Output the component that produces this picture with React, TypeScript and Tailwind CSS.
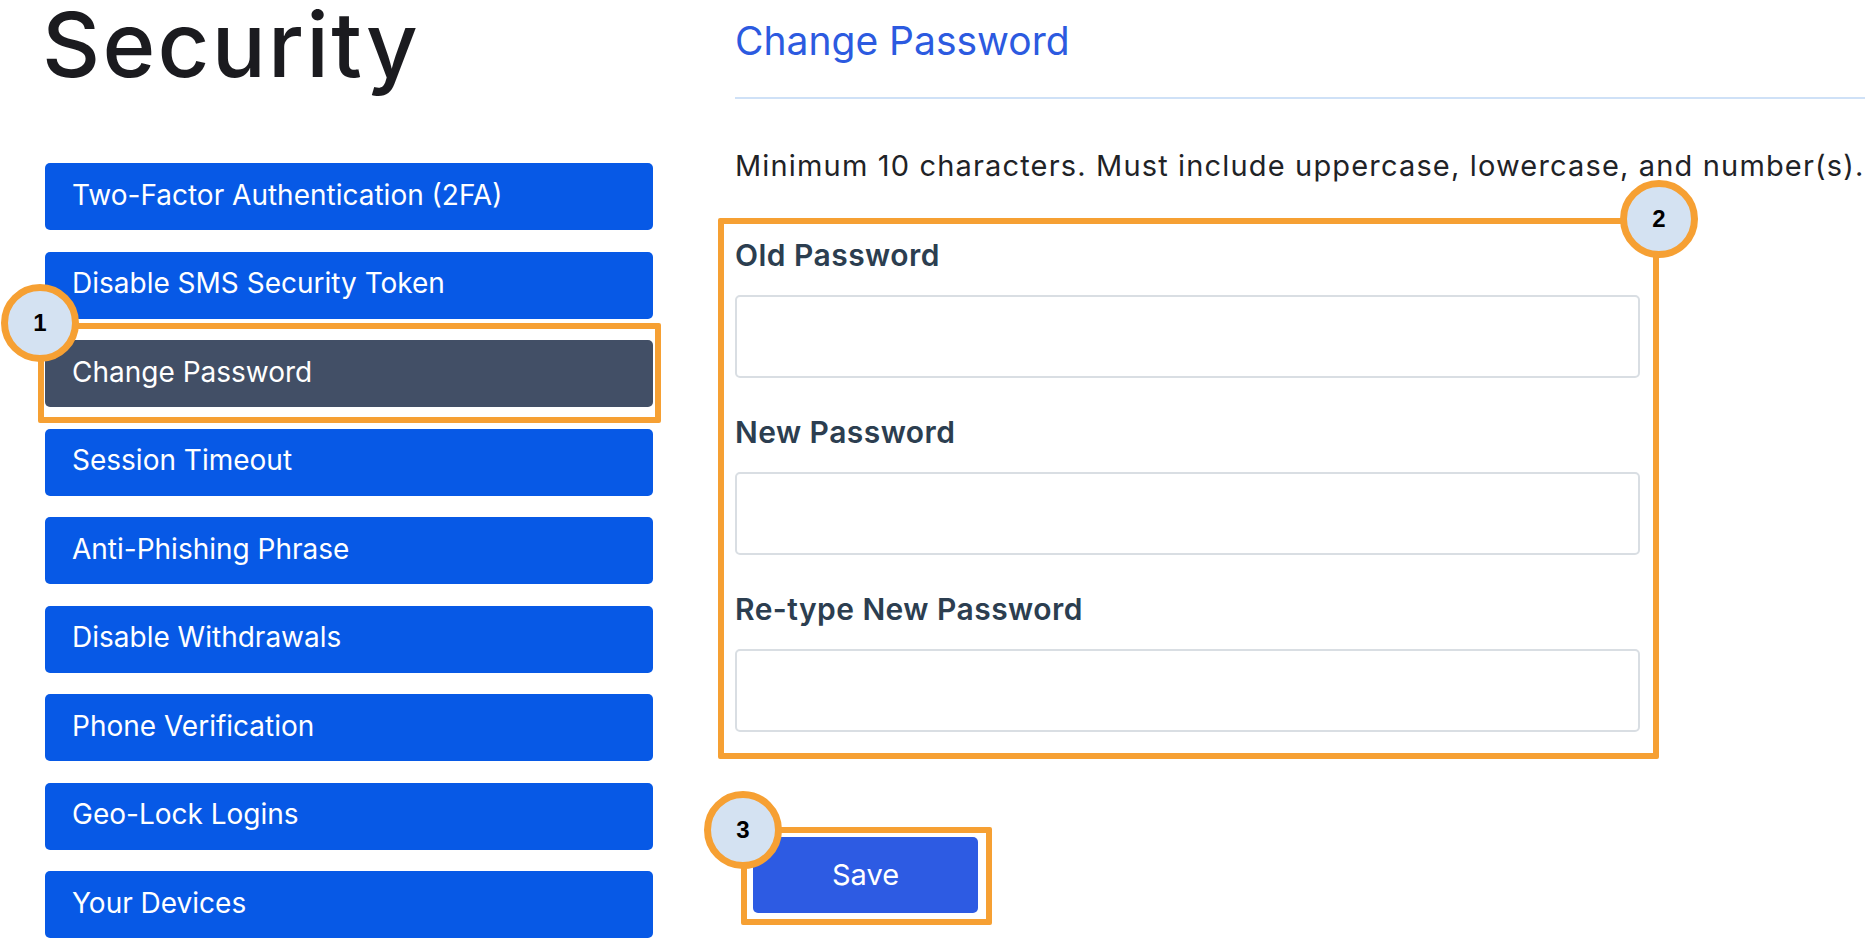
import React from "react";

const items = [
  "Two-Factor Authentication (2FA)",
  "Disable SMS Security Token",
  "Change Password",
  "Session Timeout",
  "Anti-Phishing Phrase",
  "Disable Withdrawals",
  "Phone Verification",
  "Geo-Lock Logins",
  "Your Devices",
];

function Badge({ n, className }: { n: string; className: string }) {
  return (
    <div
      className={
        "absolute z-10 flex h-[78px] w-[78px] items-center justify-center rounded-full border-[7px] border-[#f6a033] bg-[#d4e2f2] font-['Liberation_Sans',sans-serif] text-[24px] font-bold text-black " +
        className
      }
    >
      {n}
    </div>
  );
}

function Field({ label, first }: { label: string; first?: boolean }) {
  return (
    <div className={first ? "" : "mt-[36px]"}>
      <div className="text-[30px] font-semibold leading-[36px] tracking-[0.015em] text-[#2c3e50]">{label}</div>
      <input
        type="password"
        className="mt-[22px] block h-[83px] w-full rounded-[5px] border-2 border-[#d9dee3] bg-white outline-none"
      />
    </div>
  );
}

export default function App() {
  return (
    <div className="flex h-[943px] w-[1865px] overflow-hidden bg-white font-['Inter',sans-serif]">
      <div className="ml-[45px] flex w-[608px] shrink-0 flex-col">
        <h1 className="ml-[-3px] mt-[-9px] text-[90px] font-medium leading-[108px] tracking-[0.025em] text-[#1b1b1f]">
          Security
        </h1>
        <nav className="mt-[64px] flex flex-col gap-[21.5px]">
          {items.map((t) => {
            const active = t === "Change Password";
            return (
              <div key={t} className="relative">
                <div
                  className={
                    "flex h-[67px] items-center rounded-[5px] px-[27px] pb-[4px] text-[28px] text-white " +
                    (active ? "bg-[#424f66]" : "bg-[#0759e6]")
                  }
                >
                  {t}
                </div>
                {active && (
                  <>
                    <div className="pointer-events-none absolute -bottom-[16px] -left-[7px] -right-[8px] -top-[17px] rounded-[2px] border-[6px] border-[#f6a033]" />
                    <Badge n="1" className="-left-[44px] -top-[56px]" />
                  </>
                )}
              </div>
            );
          })}
        </nav>
      </div>

      <div className="ml-[82px] flex min-w-0 flex-1 flex-col">
        <h2 className="mt-[17px] text-[39px] leading-[47px] text-[#2c5ae0]">Change Password</h2>
        <div className="mt-[33px] h-[2px] w-full bg-[#cfe1f7]" />
        <p className="mt-[49px] whitespace-nowrap text-[29px] leading-[35px] tracking-[0.04em] text-[#1f2327]">
          Minimum 10 characters. Must include uppercase, lowercase, and number(s).
        </p>
        <div className="relative mt-[54px] w-[905px]">
          <div className="pointer-events-none absolute -bottom-[27px] -left-[17px] -right-[19px] -top-[19px] rounded-[2px] border-[6px] border-[#f6a033]" />
          <Badge n="2" className="-right-[58px] -top-[57px]" />
          <Field label="Old Password" first />
          <Field label="New Password" />
          <Field label="Re-type New Password" />
        </div>
        <div className="relative ml-[18px] mt-[105px] w-[225px]">
          <div className="pointer-events-none absolute -bottom-[12px] -left-[12px] -right-[14px] -top-[10px] rounded-[2px] border-[6px] border-[#f6a033]" />
          <Badge n="3" className="-left-[49px] -top-[46px]" />
          <button className="flex h-[76px] w-[225px] items-center justify-center rounded-[5px] bg-[#2d5be3] text-[29px] text-white">
            Save
          </button>
        </div>
      </div>
    </div>
  );
}
